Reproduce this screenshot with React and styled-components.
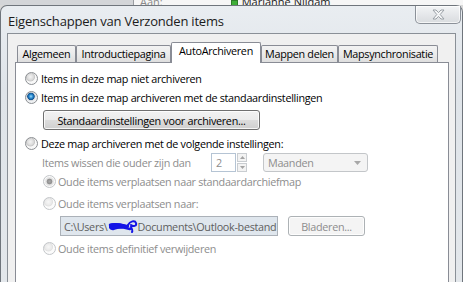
import React from 'react'
import styled, { createGlobalStyle } from 'styled-components'

const GlobalStyle = createGlobalStyle`
  body {
    margin: 0;
    background: #d8d8d8;
    font-family: "Open Sans", "Noto Sans", sans-serif;
  }
`

const Screen = styled.div`
  width: 463px;
  height: 282px;
  overflow: hidden;
  display: flex;
  flex-direction: column;
  background: #d8d8d8;
`

const BackWindow = styled.div`
  height: 5px;
  flex: none;
  display: flex;
  align-items: flex-end;
  overflow: hidden;
  font-size: 11px;
  line-height: 12px;
`

const BackPane = styled.div`
  width: 133px;
  height: 5px;
  background: #d3d5d8;
  border-right: 1px solid #9a9da2;
`

const BackText = styled.div`
  flex: 1;
  height: 5px;
  display: flex;
  align-items: flex-end;
  gap: 4px;
  padding-left: 6px;
  background: #f6f6f6;
  white-space: nowrap;
`

const Label = styled.span`
  color: ${(p) => (p.$muted ? '#8a8a8a' : '#222')};
  margin-right: ${(p) => p.$gap || 0}px;
  margin-bottom: -3px;
`

const Presence = styled.span`
  width: 7px;
  height: 8px;
  background: #3fae38;
  border: 1px solid #2d7d27;
  box-sizing: border-box;
  margin-bottom: -3px;
`

const Dialog = styled.div`
  flex: 1;
  display: flex;
  flex-direction: column;
  border: 1px solid #6f757c;
  border-bottom: none;
  border-radius: 7px 7px 0 0;
  background: linear-gradient(180deg, #e9edf1 0%, #dfe4e9 30%, #e3e7eb 100%);
  padding: 0 6px;
`

const TitleBar = styled.div`
  height: 27px;
  flex: none;
  display: flex;
  justify-content: space-between;
  align-items: flex-start;
`

const Title = styled.div`
  margin-top: 6px;
  padding-left: 1px;
  font-size: 13px;
  letter-spacing: -0.2px;
  line-height: 19px;
  color: #1b1b1b;
`

const CloseButton = styled.div`
  width: 46px;
  height: 18px;
  margin-right: -5px;
  box-sizing: border-box;
  border: 1px solid #8b9199;
  border-top: none;
  border-radius: 0 0 5px 5px;
  background: linear-gradient(180deg, #f3f4f6 0%, #e4e6e9 55%, #d9dcdf 100%);
  box-shadow: inset 0 0 0 1px rgba(255, 255, 255, 0.7);
  display: flex;
  align-items: center;
  justify-content: center;
`

const Client = styled.div`
  flex: 1;
  display: flex;
  flex-direction: column;
  border: 1px solid #8a9097;
  border-bottom: none;
  background: #f0f0f0;
  padding: 8px 6px 0 7px;
  font-size: 10.8px;
  letter-spacing: -0.3px;
`

const TabStrip = styled.div`
  height: 21px;
  flex: none;
  display: flex;
  align-items: flex-end;
  padding-left: 2px;
  position: relative;
  z-index: 1;
`

const Tab = styled.div`
  width: ${(p) => p.$w}px;
  height: ${(p) => (p.$active ? 21 : 17)}px;
  margin-bottom: ${(p) => (p.$active ? 0 : 1)}px;
  box-sizing: border-box;
  border: 1px solid #898c95;
  border-bottom: none;
  border-radius: 2px 2px 0 0;
  background: ${(p) =>
    p.$active ? '#fff' : 'linear-gradient(180deg, #f3f3f3 0%, #ebebeb 50%, #dedede 100%)'};
  line-height: ${(p) => (p.$active ? 16 : 16)}px;
  text-align: center;
  color: #000;
  white-space: nowrap;
`

const Panel = styled.div`
  flex: 1;
  margin-top: -1px;
  background: #fff;
  border: 1px solid #898c95;
  border-bottom: none;
  padding: 6px 0 0 9px;
  display: flex;
  flex-direction: column;
  color: #000;
`

const Row = styled.div`
  height: 19px;
  flex: none;
  display: flex;
  align-items: center;
  gap: ${(p) => p.$gap ?? 3}px;
  padding-left: ${(p) => p.$indent || 0}px;
  margin-top: ${(p) => p.$top || 0}px;
  color: ${(p) => (p.$disabled ? '#8d8d8d' : '#000')};
  white-space: nowrap;
`

const Radio = styled.span`
  width: 13px;
  height: 13px;
  flex: none;
  box-sizing: border-box;
  border-radius: 50%;
  border: 1px solid ${(p) => (p.$disabled ? '#c3c6c9' : '#8c8f93')};
  background: ${(p) =>
    p.$checked
      ? p.$disabled
        ? 'radial-gradient(circle at 50% 50%, #a8a8a8 0, #8f8f8f 2.5px, #e0e0e0 3.2px, #ebebeb 4.4px, #fafafa 5px)'
        : 'radial-gradient(circle at 45% 40%, #9fdcfb 0, #2f8fd3 1.8px, #10508f 3.4px, #cfd3d7 4px, #eef0f2 5px)'
      : p.$disabled
        ? 'radial-gradient(circle at 40% 35%, #f7f7f7 0, #ebebeb 3px, #e2e2e2 4.2px, #fbfbfb 5px)'
        : 'radial-gradient(circle at 40% 35%, #f4f4f4 0, #dcdcdc 3px, #c8c8c8 4.2px, #f8f8f8 5px)'};
`

const PushButton = styled.div`
  width: ${(p) => p.$w}px;
  height: ${(p) => p.$h || 20}px;
  box-sizing: border-box;
  border: 1px solid ${(p) => (p.$disabled ? '#adb2b5' : '#707070')};
  border-radius: 3px;
  background: ${(p) =>
    p.$disabled
      ? '#f4f4f4'
      : 'linear-gradient(180deg, #f2f2f2 0%, #ebebeb 50%, #dddddd 51%, #cfcfcf 100%)'};
  box-shadow: inset 0 0 0 1px rgba(255, 255, 255, 0.8);
  color: ${(p) => (p.$disabled ? '#8d8d8d' : '#000')};
  display: flex;
  align-items: center;
  justify-content: center;
  white-space: nowrap;
`

const ButtonRow = styled.div`
  display: flex;
  padding-left: ${(p) => p.$indent}px;
  margin-top: ${(p) => p.$top}px;
  gap: ${(p) => p.$gap || 0}px;
  align-items: center;
`

const AgeLabel = styled.span`
  width: 169px;
  flex: none;
`

const SpinBox = styled.div`
  display: flex;
  height: 19px;
`

const SpinInput = styled.div`
  width: 25px;
  box-sizing: border-box;
  border: 1px solid #b5c4d4;
  background: #fff;
  padding-left: 4px;
  line-height: 17px;
  color: #8d8d8d;
`

const SpinButtons = styled.div`
  width: 10px;
  display: flex;
  flex-direction: column;
  gap: 1px;
  margin-left: 1px;
`

const SpinHalf = styled.div`
  flex: 1;
  border: 1px solid #c9cdd1;
  background: #f3f3f3;
  display: flex;
  align-items: center;
  justify-content: center;
`

const Combo = styled.div`
  width: 105px;
  height: 19px;
  margin-left: 16px;
  box-sizing: border-box;
  border: 1px solid #c3c6c9;
  border-radius: 3px;
  background: #f4f4f4;
  display: flex;
  align-items: center;
  justify-content: space-between;
  padding: 0 6px 0 4px;
  color: #8d8d8d;
`

const PathField = styled.div`
  width: 218px;
  height: 20px;
  box-sizing: border-box;
  border: 1px solid #abb1b8;
  background: #dfe6ed;
  display: flex;
  align-items: center;
  padding-left: 3px;
  color: #5e5e5e;
  white-space: nowrap;
  overflow: hidden;
`

const Arrow = ({ up, color = '#a3a3a3' }) => (
  <svg width={5} height={3} viewBox="0 0 5 3">
    <path d={up ? 'M0 3 L2.5 0 L5 3 Z' : 'M0 0 L5 0 L2.5 3 Z'} fill={color} />
  </svg>
)

const CloseGlyph = () => (
  <svg width="13" height="11" viewBox="0 0 13 11">
    <path
      d="M1 1 H4 L6.5 3.6 L9 1 H12 L8.2 5.5 L12 10 H9 L6.5 7.4 L4 10 H1 L4.8 5.5 Z"
      fill="#f6f7f8"
      stroke="#9aa0a6"
      strokeWidth="1"
      strokeLinejoin="round"
    />
  </svg>
)

// the user name in the path is scribbled over in blue
const Scribble = () => (
  <svg width="30" height="14" viewBox="0 0 30 14" style={{ flex: 'none' }}>
    <path
      d="M1 5 C6 3 12 4 18 6 L21 8 C17 10 10 9 6 11 C4 12 2 10 1 9 Z"
      fill="#1414e6"
    />
    <path
      d="M2 6 C8 4 14 6 20 7 M3 9 C9 7 15 8 22 10"
      stroke="#1414e6"
      strokeWidth="2.4"
      fill="none"
      strokeLinecap="round"
    />
    <path
      d="M20 6 C22 2 27 1 28 4 C29 7 25 8 23 6 M23 8 C24 10 25 12 24 13"
      stroke="#1414e6"
      strokeWidth="2"
      fill="none"
      strokeLinecap="round"
    />
  </svg>
)

const tabs = [
  { label: 'Algemeen', w: 59 },
  { label: 'Introductiepagina', w: 95 },
  { label: 'AutoArchiveren', w: 90, active: true },
  { label: 'Mappen delen', w: 77 },
  { label: 'Mapsynchronisatie', w: 100 },
]

const App = () => {
  return (
    <Screen>
      <GlobalStyle />
      <BackWindow>
        <BackPane />
        <BackText>
          <Label $muted $gap={64}>Aan:</Label>
          <Presence />
          <Label>Marianne Nijdam</Label>
        </BackText>
      </BackWindow>
      <Dialog>
        <TitleBar>
          <Title>Eigenschappen van Verzonden items</Title>
          <CloseButton>
            <CloseGlyph />
          </CloseButton>
        </TitleBar>
        <Client>
          <TabStrip>
            {tabs.map((t) => (
              <Tab key={t.label} $w={t.w} $active={t.active}>
                {t.label}
              </Tab>
            ))}
          </TabStrip>
          <Panel>
            <Row>
              <Radio />
              Items in deze map niet archiveren
            </Row>
            <Row>
              <Radio $checked />
              Items in deze map archiveren met de standaardinstellingen
            </Row>
            <ButtonRow $indent={18} $top={3}>
              <PushButton $w={217}>Standaardinstellingen voor archiveren...</PushButton>
            </ButtonRow>
            <Row $top={4}>
              <Radio />
              Deze map archiveren met de volgende instellingen:
            </Row>
            <Row $indent={17} $disabled $gap={0}>
              <AgeLabel>Items wissen die ouder zijn dan</AgeLabel>
              <SpinBox>
                <SpinInput>2</SpinInput>
                <SpinButtons>
                  <SpinHalf>
                    <Arrow up />
                  </SpinHalf>
                  <SpinHalf>
                    <Arrow />
                  </SpinHalf>
                </SpinButtons>
              </SpinBox>
              <Combo>
                Maanden
                <svg width="7" height="4" viewBox="0 0 7 4">
                  <path d="M0 0 H7 L3.5 4 Z" fill="#a8a8a8" />
                </svg>
              </Combo>
            </Row>
            <Row $indent={18} $disabled $gap={2}>
              <Radio $checked $disabled />
              Oude items verplaatsen naar standaardarchiefmap
            </Row>
            <Row $indent={18} $disabled $gap={2} $top={3}>
              <Radio $disabled />
              Oude items verplaatsen naar:
            </Row>
            <ButtonRow $indent={35} $top={3} $gap={10}>
              <PathField>
                C:\Users\
                <Scribble />
                Documents\Outlook-bestand
              </PathField>
              <PushButton $w={77} $disabled>
                Bladeren...
              </PushButton>
            </ButtonRow>
            <Row $indent={18} $disabled $gap={2} $top={3}>
              <Radio $disabled />
              Oude items definitief verwijderen
            </Row>
          </Panel>
        </Client>
      </Dialog>
    </Screen>
  )
}

export default App
